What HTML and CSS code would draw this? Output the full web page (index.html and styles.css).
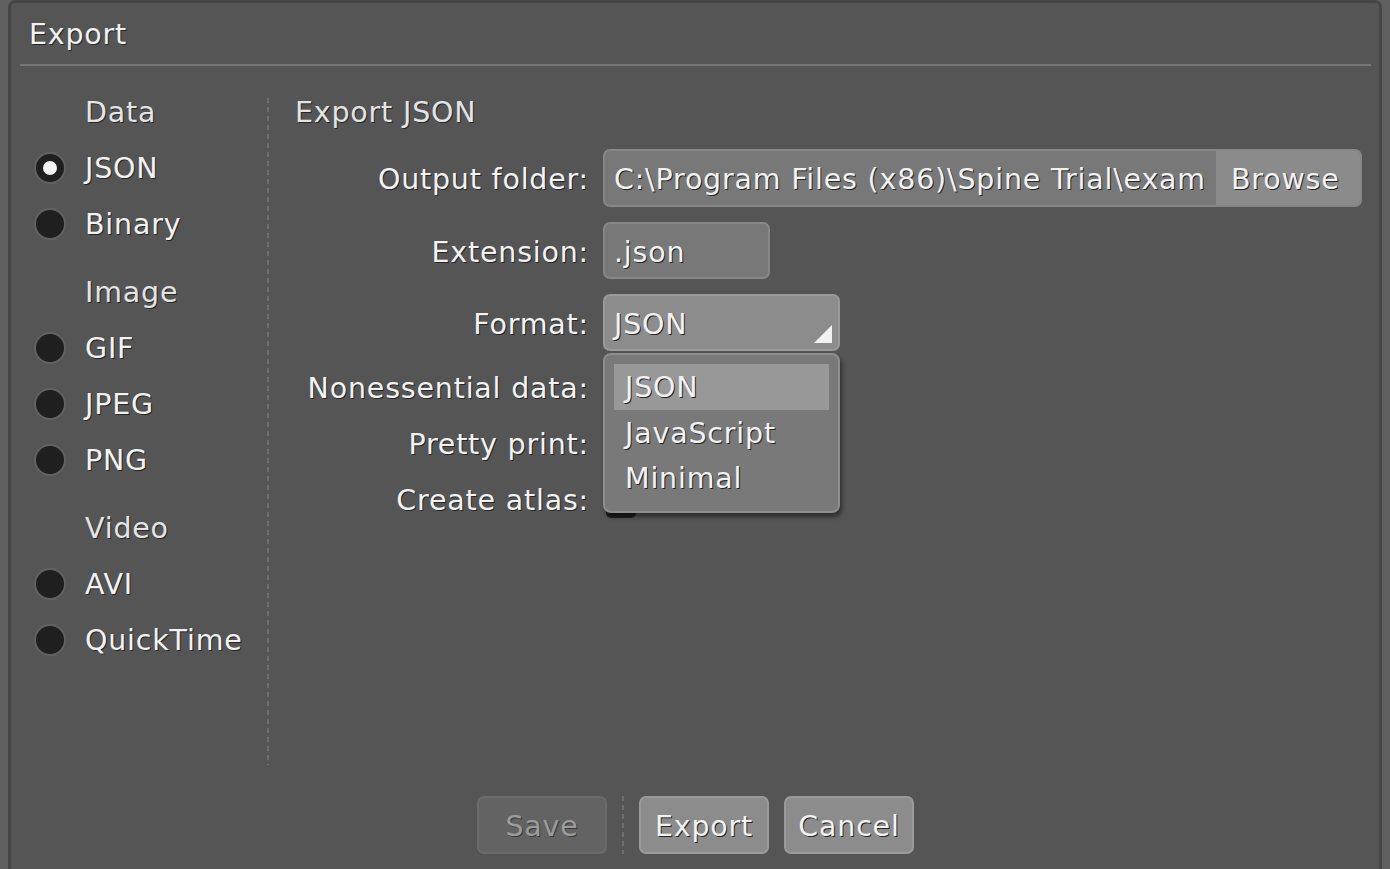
FILE: index.html
```html
<!DOCTYPE html>
<html>
<head>
<meta charset="utf-8">
<link rel="stylesheet" href="styles.css">
</head>
<body>
<div class="dialog">
  <div class="title">Export</div>
  <div class="rule"></div>
  <div class="main">
    <div class="nav">
      <div class="group">Data</div>
      <div class="opt"><span class="radio on"></span>JSON</div>
      <div class="opt"><span class="radio"></span>Binary</div>
      <div class="group gap">Image</div>
      <div class="opt"><span class="radio"></span>GIF</div>
      <div class="opt"><span class="radio"></span>JPEG</div>
      <div class="opt"><span class="radio"></span>PNG</div>
      <div class="group gap">Video</div>
      <div class="opt"><span class="radio"></span>AVI</div>
      <div class="opt"><span class="radio"></span>QuickTime</div>
    </div>
    <div class="divider"></div>
    <div class="panel">
      <div class="heading">Export JSON</div>
      <div class="row first">
        <div class="label">Output folder:</div>
        <div class="field wide">
          <div class="value">C:\Program Files (x86)\Spine Trial\exam</div>
          <div class="browse">Browse</div>
        </div>
      </div>
      <div class="row">
        <div class="label">Extension:</div>
        <div class="field ext"><div class="value">.json</div></div>
      </div>
      <div class="row">
        <div class="label">Format:</div>
        <div class="select">
          <div class="value">JSON</div>
          <svg class="corner" width="20" height="20" viewBox="0 0 20 20"><polygon points="19,1 19,19 1,19" fill="#f2f2f2"/></svg>
          <div class="menu">
            <div class="item active">JSON</div>
            <div class="item">JavaScript</div>
            <div class="item">Minimal</div>
          </div>
        </div>
      </div>
      <div class="row check first-check">
        <div class="label">Nonessential data:</div>
        <span class="box"></span>
      </div>
      <div class="row check">
        <div class="label">Pretty print:</div>
        <span class="box"></span>
      </div>
      <div class="row check">
        <div class="label">Create atlas:</div>
        <span class="box"></span>
      </div>
    </div>
  </div>
  <div class="footer">
    <div class="btn disabled">Save</div>
    <div class="vsep"></div>
    <div class="btn">Export</div>
    <div class="btn">Cancel</div>
  </div>
</div>
</body>
</html>
```
FILE: styles.css
```css
html, body {
  margin: 0;
  padding: 0;
}
body {
  width: 1390px;
  height: 869px;
  overflow: hidden;
  background: #5f5f5f;
  font-family: "DejaVu Sans", "Liberation Sans", sans-serif;
  font-size: 28.5px;
  letter-spacing: 0.8px;
  color: #f2f2f2;
  text-shadow: 1px 1px 0 #262626;
}
.dialog {
  margin: 0 8px;
  height: 869px;
  box-sizing: border-box;
  border: 3px solid #464646;
  border-bottom: none;
  border-radius: 7px 7px 0 0;
  background: #555555;
  display: flex;
  flex-direction: column;
}
.title {
  height: 61px;
  line-height: 64px;
  padding-left: 18px;
  box-sizing: border-box;
}
.rule {
  height: 2px;
  margin: 0 8px 0 9px;
  background: #767676;
}
.main {
  display: flex;
  padding-top: 18px;
  height: 696px;
  box-sizing: border-box;
}
.nav {
  width: 256px;
  flex: none;
}
.group {
  height: 56px;
  line-height: 58px;
  padding-left: 74px;
  color: #e4e4e4;
}
.group.gap {
  margin-top: 12px;
}
.opt {
  height: 56px;
  display: flex;
  align-items: center;
  padding-left: 23px;
  gap: 19px;
}
.radio {
  width: 28px;
  height: 28px;
  border-radius: 50%;
  background: #1f1f1f;
  box-shadow: 0 0 0 2px #626262;
  margin-left: 2px;
  margin-right: 2px;
  box-sizing: border-box;
  flex: none;
}
.radio.on {
  background: #f4f4f4;
  border: 7px solid #1f1f1f;
}
.divider {
  width: 2px;
  flex: none;
  margin-top: 14px;
  height: 667px;
  background: repeating-linear-gradient(to bottom, #6e6e6e 0 5px, transparent 5px 9px);
}
.panel {
  flex: 1;
  padding-left: 26px;
  padding-right: 17px;
}
.heading {
  height: 56px;
  line-height: 58px;
  color: #e4e4e4;
}
.row {
  display: flex;
  align-items: center;
  gap: 14px;
  margin-top: 15px;
}
.row.first {
  margin-top: 9px;
}
.row.check {
  height: 56px;
  margin-top: 0;
}
.row.first-check {
  margin-top: 8px;
}
.label {
  width: 294px;
  flex: none;
  text-align: right;
  white-space: nowrap;
  padding-top: 3px;
}
.field {
  height: 57px;
  box-sizing: border-box;
  border: 2px solid #878787;
  border-radius: 7px;
  background: #787878;
  display: flex;
  align-items: center;
  overflow: hidden;
}
.field.wide {
  flex: 1;
  height: 58px;
}
.field.ext {
  width: 167px;
}
.value {
  padding-left: 9px;
  padding-top: 3px;
  white-space: nowrap;
  overflow: hidden;
  flex: 1;
}
.browse {
  flex: none;
  width: 144px;
  align-self: stretch;
  display: flex;
  align-items: center;
  padding-left: 15px;
  padding-top: 3px;
  box-sizing: border-box;
  background: #8b8b8b;
}
.select {
  position: relative;
  width: 237px;
  height: 57px;
  box-sizing: border-box;
  border: 2px solid #9a9a9a;
  border-radius: 7px;
  background: #8c8c8c;
  display: flex;
  align-items: center;
}
.corner {
  position: absolute;
  right: 5px;
  bottom: 5px;
}
.menu {
  position: absolute;
  left: -2px;
  top: 57px;
  width: 237px;
  box-sizing: border-box;
  padding: 9px 9px 10px 9px;
  border: 2px solid #8e8e8e;
  border-radius: 8px;
  background: #797979;
  box-shadow: 2px 4px 4px rgba(0, 0, 0, 0.45);
  z-index: 2;
}
.item {
  height: 45.5px;
  line-height: 48px;
  padding-left: 11px;
}
.item.active {
  background: #989898;
}
.box {
  width: 30px;
  height: 30px;
  margin-left: 3px;
  border-radius: 5px;
  background: #1f1f1f;
  position: relative;
  top: 4px;
}
.footer {
  flex: 1;
  display: flex;
  justify-content: center;
  align-items: flex-start;
  padding-top: 34px;
  gap: 15px;
  padding-left: 1px;
}
.btn {
  width: 130px;
  height: 58px;
  box-sizing: border-box;
  border: 2px solid #9a9a9a;
  border-radius: 7px;
  background: #8c8c8c;
  display: flex;
  align-items: center;
  justify-content: center;
  padding-top: 3px;
}
.btn.disabled {
  background: #636363;
  border-color: #6a6a6a;
  color: #9c9c9c;
  text-shadow: 1px 1px 0 #3a3a3a;
}
.vsep {
  width: 2px;
  height: 58px;
  background: repeating-linear-gradient(to bottom, #6e6e6e 0 5px, transparent 5px 9px);
}
```
